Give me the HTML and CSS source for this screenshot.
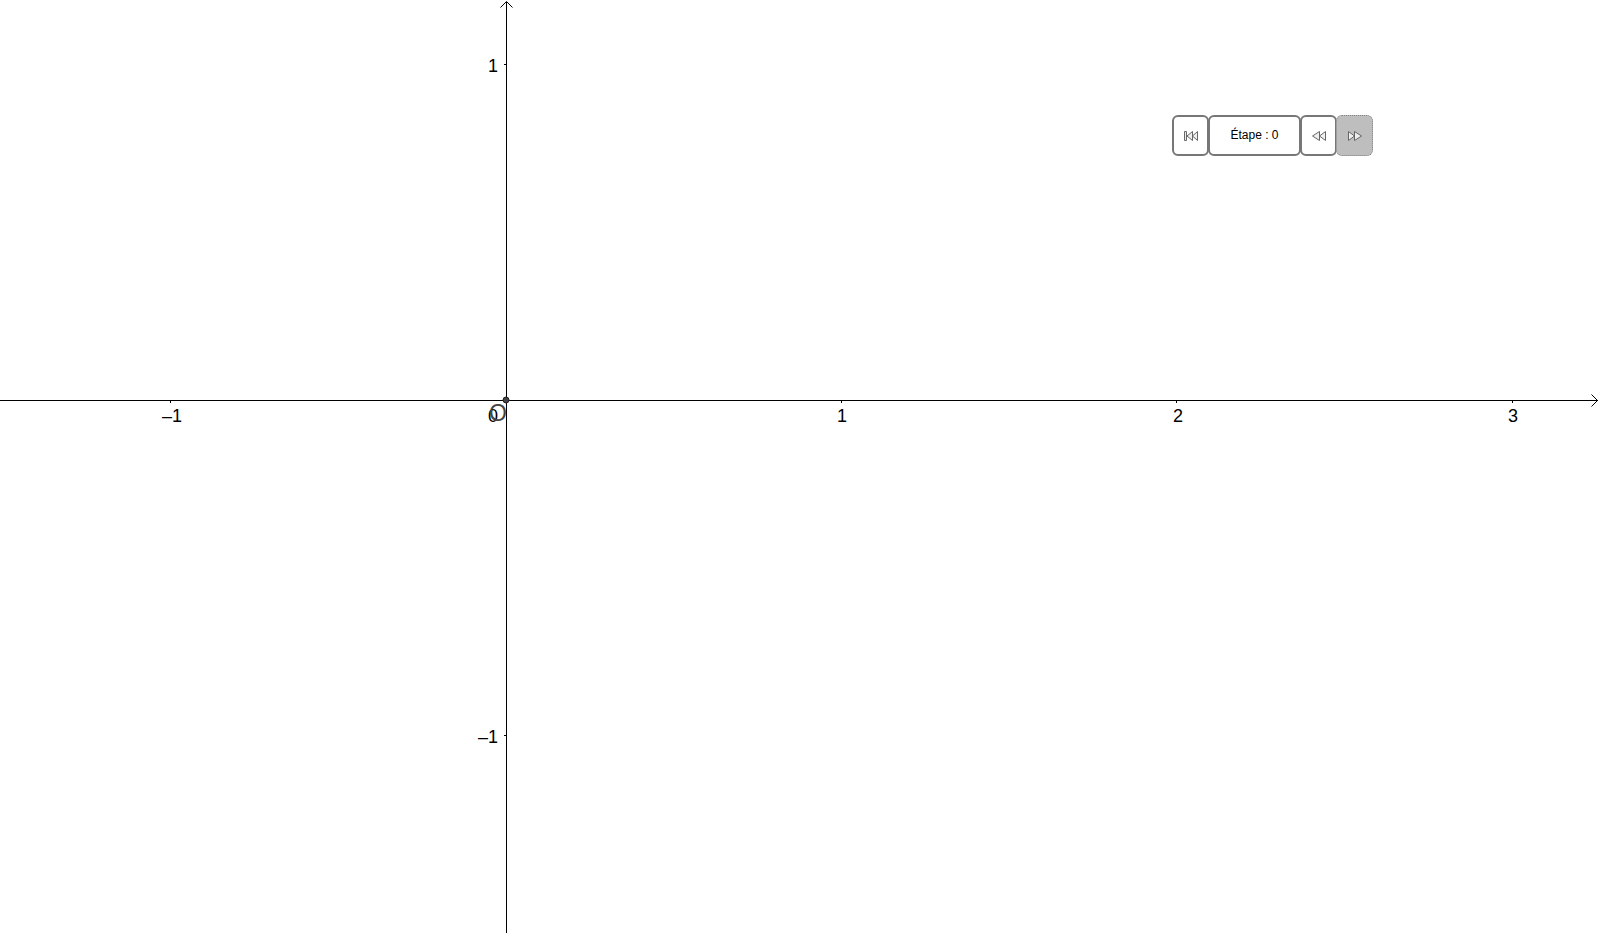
FILE: index.html
```html
<!DOCTYPE html>
<html lang="fr">
  <head>
    <meta charset="UTF-8" />
    <meta name="viewport" content="width=device-width, initial-scale=1.0" />
    <title>Construction</title>
    <link rel="stylesheet" href="styles.css">
  </head>
  <body>
    <main class="graphique">
      <svg class="repere" role="img" aria-label="Repère">
        <!-- axes -->
        <g class="axe">
          <line x1="0" y1="400.5" x2="100%" y2="400.5" />
          <line x1="506.5" y1="2" x2="506.5" y2="100%" />
          <path d="M500.5 7.5 L506.5 1.5 L512.5 7.5" />
          <svg x="100%" y="400" overflow="visible">
            <path d="M-6.5 -5.5 L-0.5 0.5 L-6.5 6.5" />
          </svg>
        </g>

        <!-- graduations -->
        <g class="axe">
          <path d="M170.5 401 V403 M841.5 401 V403 M1176.5 401 V403 M1512.5 401 V403" />
          <path d="M504 64.5 H506 M504 735.5 H506" />
        </g>
        <g class="nombres">
          <text x="162" y="422">–1</text>
          <text x="837" y="422">1</text>
          <text x="1173" y="422">2</text>
          <text x="1508" y="422">3</text>
          <text x="488" y="422">0</text>
          <text x="488" y="72">1</text>
          <text x="478" y="743">–1</text>
        </g>

        <!-- origine -->
        <circle class="point" cx="506" cy="400" r="3" />
        <text class="nom" x="489" y="421">O</text>
      </svg>

      <div class="navigation">
        <button type="button" class="bouton" id="debut" aria-label="Début">
          <svg width="16" height="12" viewBox="0 0 16 12">
            <path d="M1.5 1.5 H3.5 V10.5 H1.5 Z M9.5 1.5 V10.5 L4 6 Z M14.5 1.5 V10.5 L9.5 6 Z" />
          </svg>
        </button>
        <button type="button" class="bouton etape" id="etape">Étape : 0</button>
        <button type="button" class="bouton" id="precedent" aria-label="Précédent">
          <svg width="16" height="12" viewBox="0 0 16 12">
            <path d="M8.5 1.5 V10.5 L1.5 6 Z M14.5 1.5 V10.5 L8.5 6 Z" />
          </svg>
        </button>
        <button type="button" class="bouton actif" id="suivant" aria-label="Suivant">
          <svg width="16" height="12" viewBox="0 0 16 12">
            <path d="M1.5 1.5 V10.5 L7.5 6 Z M7.5 1.5 V10.5 L14.5 6 Z" />
          </svg>
        </button>
      </div>
    </main>

    <script>
      let etape = 0;

      function changerEtape(n) {
        etape = Math.max(0, n);
        document.getElementById("etape").textContent = "Étape : " + etape;
      }

      document.getElementById("debut").onclick = () => changerEtape(0);
      document.getElementById("precedent").onclick = () => changerEtape(etape - 1);
      document.getElementById("suivant").onclick = () => changerEtape(etape + 1);
    </script>
  </body>
</html>
```
FILE: styles.css
```css
body {
  margin: 0;
  background-color: #fff;
  font-family: "Liberation Sans", Arial, sans-serif;
}
.graphique {
  position: relative;
  box-sizing: border-box;
  height: 100vh;
  padding: 0 2px 2px 0;
  overflow: hidden;
}
.repere {
  display: block;
  width: 100%;
  height: 100%;
}
.axe {
  fill: none;
  stroke: #000;
  stroke-width: 1px;
}
.nombres {
  font-size: 18px;
  fill: #000;
}
.point {
  fill: #444;
  stroke: #222;
}
.nom {
  font-size: 23px;
  fill: #444;
}
/* barre posée sur le graphique */
.navigation {
  position: absolute;
  left: 1172px;
  top: 115px;
  display: flex;
}
.bouton {
  display: flex;
  align-items: center;
  justify-content: center;
  box-sizing: border-box;
  width: 37px;
  height: 41px;
  padding: 0;
  border: 2px solid #777;
  border-radius: 6px;
  background-color: #fff;
  color: #000;
  font-family: inherit;
  font-size: 12px;
}
.bouton + .bouton {
  margin-left: -1px;
}
.bouton path {
  fill: #eee;
  stroke: #666;
  stroke-width: 1px;
}
.bouton.etape {
  width: 93px;
  padding-bottom: 2px;
}
.bouton.actif {
  border: 1px dotted #808080;
  background-color: #bebebe;
}
```
